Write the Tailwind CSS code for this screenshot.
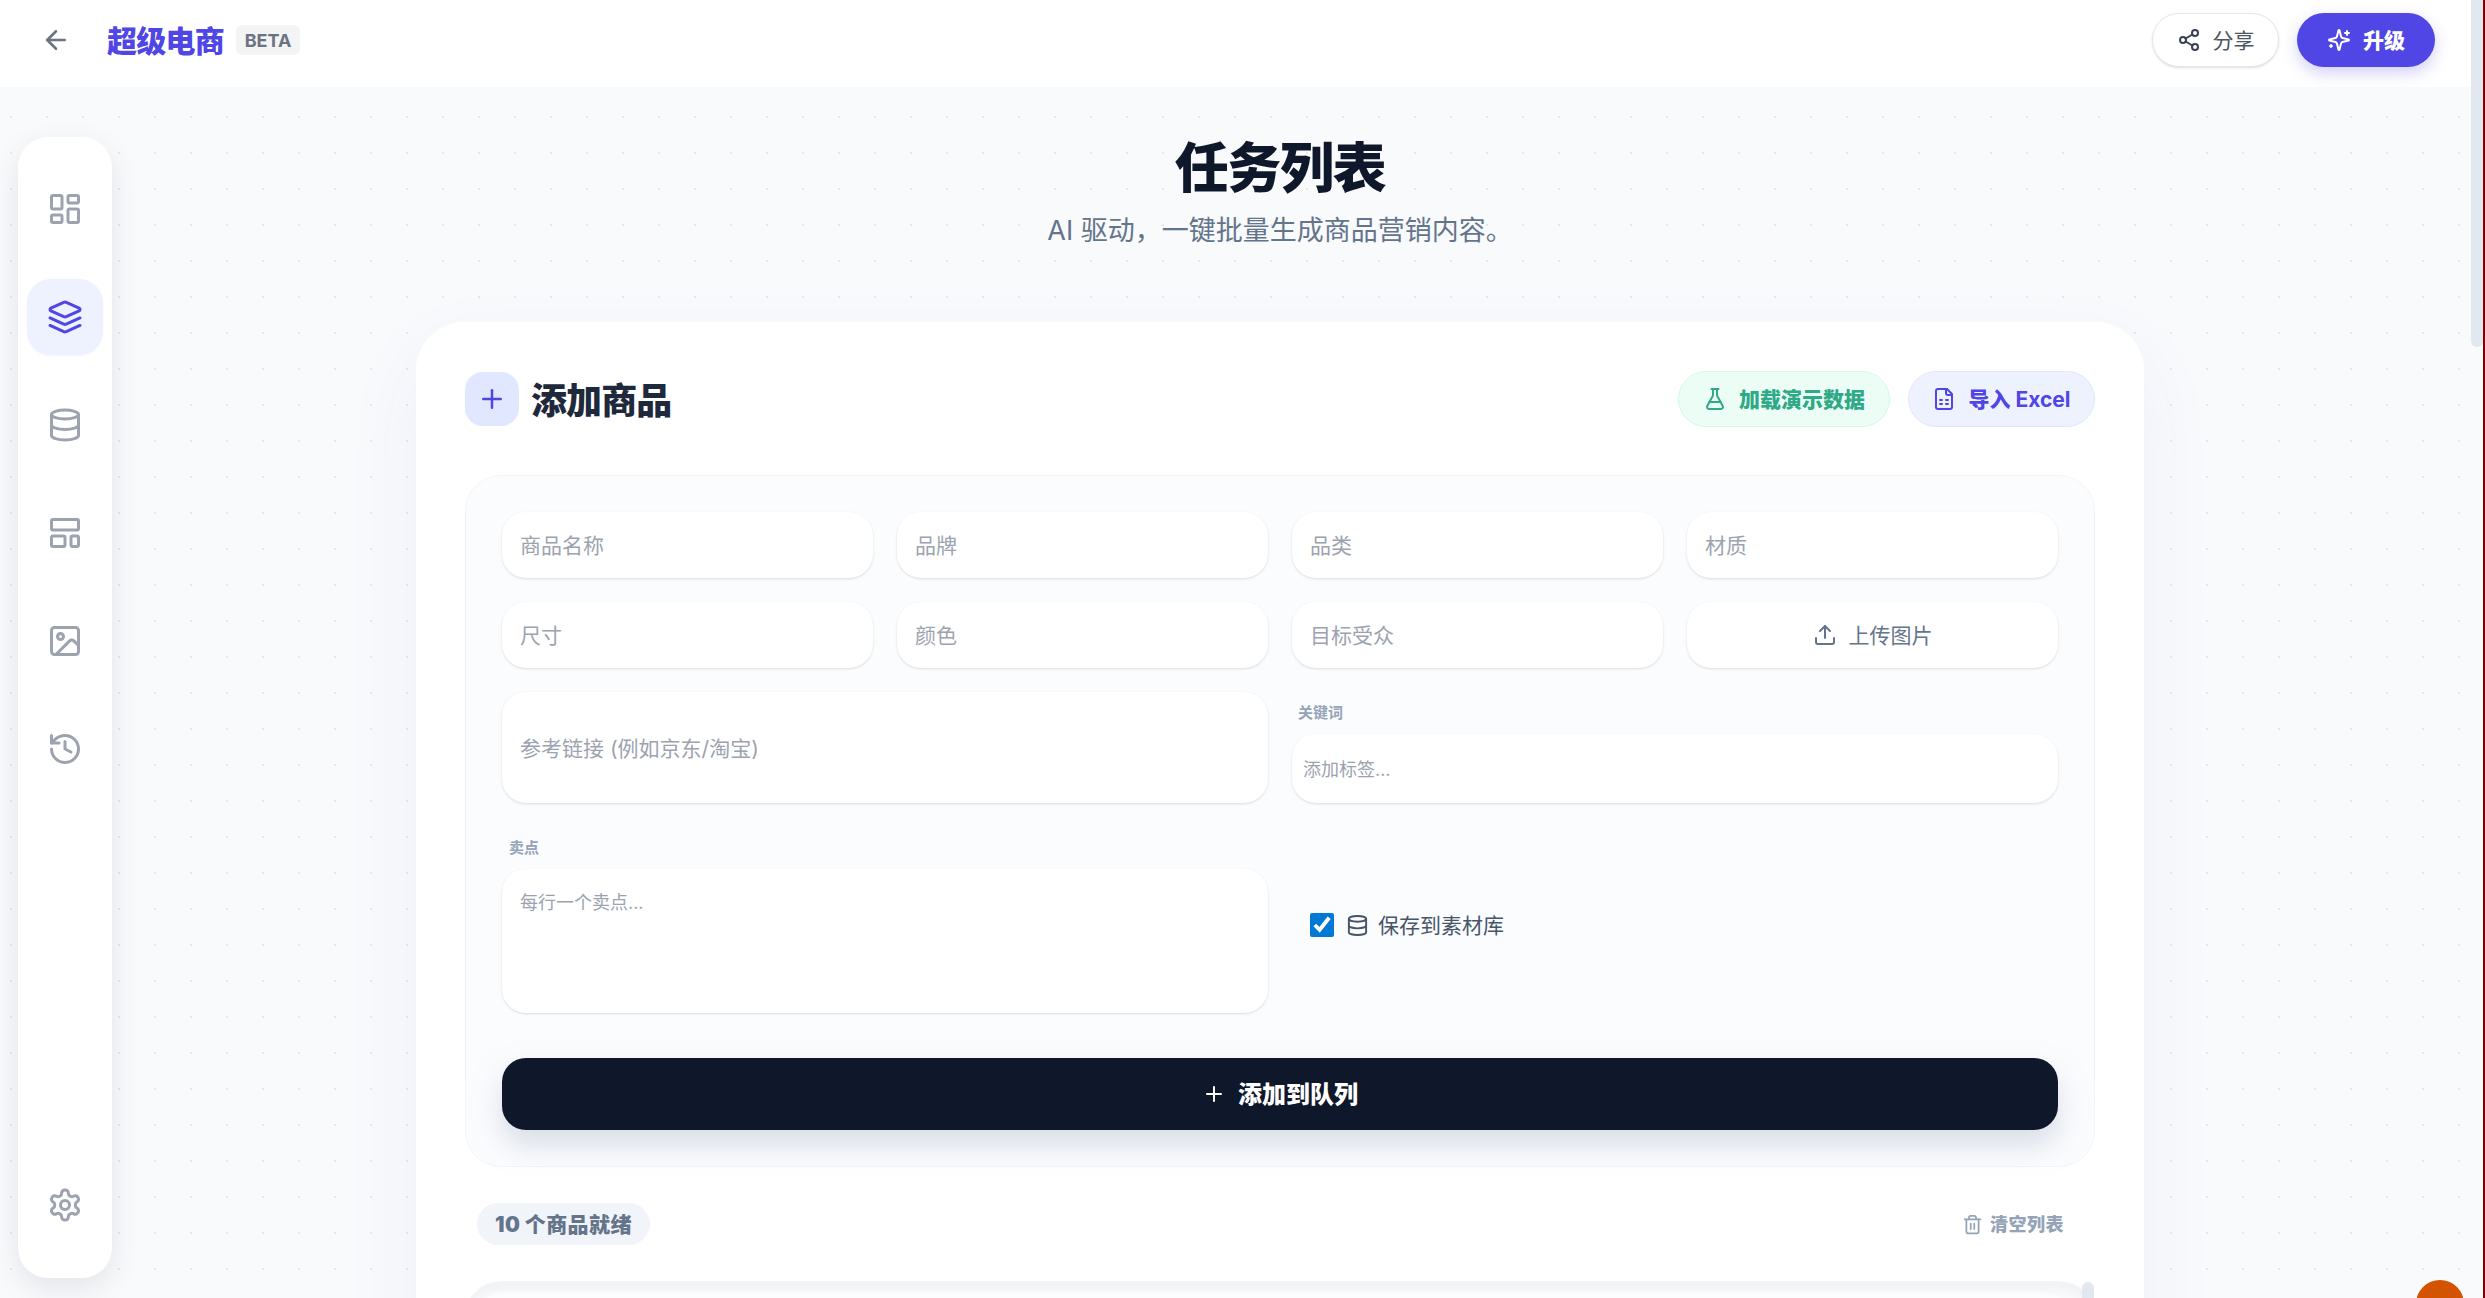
<!DOCTYPE html>
<html lang="zh-CN">
<head>
<meta charset="utf-8">
<title>超级电商</title>
<script src="https://cdn.jsdelivr.net/npm/@tailwindcss/browser@4"></script>
</head>
<body class="m-0 overflow-hidden">
<div class="relative flex h-[1298px] w-[2485px] overflow-hidden bg-[#f8fafc] font-['Inter','Noto_Sans_CJK_SC',sans-serif]">
  <div class="flex min-w-0 flex-1 flex-col">
    <!-- top bar -->
    <header class="flex h-[87px] shrink-0 items-center justify-between bg-white pb-[7px] pl-[41px] pr-[36px]">
      <div class="flex items-center">
        <svg class="size-[30px] text-[#6b7280]" viewBox="0 0 24 24" fill="none" stroke="currentColor" stroke-width="2" stroke-linecap="round" stroke-linejoin="round"><path d="m12 19-7-7 7-7"/><path d="M19 12H5"/></svg>
        <span class="ml-[36px] pt-[1px] text-[30px] font-black leading-[40px] tracking-[-0.75px] text-[#4f46e5]">超级电商</span>
        <span class="ml-[12px] flex h-[30px] w-[64px] items-center justify-center rounded-[6px] bg-[#f3f4f6] text-[18px] font-bold text-[#6b7280]">BETA</span>
      </div>
      <div class="flex items-center gap-[18px]">
        <div class="flex h-[54px] w-[127px] items-center justify-center gap-[12px] rounded-full border-[1.5px] border-[#e5e7eb] bg-white text-[21px] text-[#4b5563] shadow-sm">
          <svg class="size-[24px] text-[#374151]" viewBox="0 0 24 24" fill="none" stroke="currentColor" stroke-width="2" stroke-linecap="round" stroke-linejoin="round"><circle cx="18" cy="5" r="3"/><circle cx="6" cy="12" r="3"/><circle cx="18" cy="19" r="3"/><line x1="8.59" x2="15.42" y1="13.51" y2="17.49"/><line x1="15.41" x2="8.59" y1="6.51" y2="10.49"/></svg>
          <span class="pt-[2px]">分享</span>
        </div>
        <div class="flex h-[54px] w-[138px] items-center justify-center gap-[12px] rounded-full bg-[#4f46e5] text-[21px] font-black text-white shadow-[0_6px_15px_rgba(79,70,229,0.25)]">
          <svg class="size-[24px]" viewBox="0 0 24 24" fill="none" stroke="currentColor" stroke-width="2" stroke-linecap="round" stroke-linejoin="round"><path d="M9.937 15.5A2 2 0 0 0 8.5 14.063l-6.135-1.582a.5.5 0 0 1 0-.962L8.5 9.936A2 2 0 0 0 9.937 8.5l1.582-6.135a.5.5 0 0 1 .963 0L14.063 8.5A2 2 0 0 0 15.5 9.937l6.135 1.581a.5.5 0 0 1 0 .964L15.5 14.063a2 2 0 0 0-1.437 1.437l-1.582 6.135a.5.5 0 0 1-.963 0z"/><path d="M20 3v4"/><path d="M22 5h-4"/><path d="M4 17v2"/><path d="M5 18H3"/></svg>
          <span class="pt-[1px]">升级</span>
        </div>
      </div>
    </header>

    <div class="flex min-h-0 flex-1 bg-[radial-gradient(#e2e8f0_1.5px,transparent_1.5px)] bg-[size:36px_36px] bg-[position:-7px_12px]">
      <!-- side rail -->
      <aside class="mb-[20px] ml-[18px] mt-[50px] flex w-[94px] shrink-0 flex-col items-center gap-[32px] rounded-[30px] bg-white py-[34px] text-[#9ca3af] shadow-[0_10px_30px_rgba(15,23,42,0.09)]">
        <div class="flex size-[76px] items-center justify-center rounded-[24px]">
          <svg class="size-[36px]" viewBox="0 0 24 24" fill="none" stroke="currentColor" stroke-width="2" stroke-linecap="round" stroke-linejoin="round"><rect width="7" height="9" x="3" y="3" rx="1"/><rect width="7" height="5" x="14" y="3" rx="1"/><rect width="7" height="9" x="14" y="12" rx="1"/><rect width="7" height="5" x="3" y="16" rx="1"/></svg>
        </div>
        <div class="flex size-[76px] items-center justify-center rounded-[24px] bg-[#eef2ff] text-[#4f46e5] shadow-[0_1px_2px_rgba(79,70,229,0.06)]">
          <svg class="size-[36px]" viewBox="0 0 24 24" fill="none" stroke="currentColor" stroke-width="2" stroke-linecap="round" stroke-linejoin="round"><path d="m12.83 2.18a2 2 0 0 0-1.66 0L2.6 6.08a1 1 0 0 0 0 1.83l8.58 3.91a2 2 0 0 0 1.66 0l8.58-3.9a1 1 0 0 0 0-1.83Z"/><path d="m22 17.65-9.17 4.16a2 2 0 0 1-1.66 0L2 17.65"/><path d="m22 12.65-9.17 4.16a2 2 0 0 1-1.66 0L2 12.65"/></svg>
        </div>
        <div class="flex size-[76px] items-center justify-center rounded-[24px]">
          <svg class="size-[36px]" viewBox="0 0 24 24" fill="none" stroke="currentColor" stroke-width="2" stroke-linecap="round" stroke-linejoin="round"><ellipse cx="12" cy="5" rx="9" ry="3"/><path d="M3 5V19A9 3 0 0 0 21 19V5"/><path d="M3 12A9 3 0 0 0 21 12"/></svg>
        </div>
        <div class="flex size-[76px] items-center justify-center rounded-[24px]">
          <svg class="size-[36px]" viewBox="0 0 24 24" fill="none" stroke="currentColor" stroke-width="2" stroke-linecap="round" stroke-linejoin="round"><rect width="18" height="7" x="3" y="3" rx="1"/><rect width="9" height="7" x="3" y="14" rx="1"/><rect width="5" height="7" x="16" y="14" rx="1"/></svg>
        </div>
        <div class="flex size-[76px] items-center justify-center rounded-[24px]">
          <svg class="size-[36px]" viewBox="0 0 24 24" fill="none" stroke="currentColor" stroke-width="2" stroke-linecap="round" stroke-linejoin="round"><rect width="18" height="18" x="3" y="3" rx="2" ry="2"/><circle cx="9" cy="9" r="2"/><path d="m21 15-3.086-3.086a2 2 0 0 0-2.828 0L6 21"/></svg>
        </div>
        <div class="flex size-[76px] items-center justify-center rounded-[24px]">
          <svg class="size-[36px]" viewBox="0 0 24 24" fill="none" stroke="currentColor" stroke-width="2" stroke-linecap="round" stroke-linejoin="round"><path d="M3 12a9 9 0 1 0 9-9 9.75 9.75 0 0 0-6.74 2.74L3 8"/><path d="M3 3v5h5"/><path d="M12 7v5l4 2"/></svg>
        </div>
        <div class="mt-auto flex size-[76px] items-center justify-center rounded-[24px] pb-[3px]">
          <svg class="size-[36px]" viewBox="0 0 24 24" fill="none" stroke="currentColor" stroke-width="2" stroke-linecap="round" stroke-linejoin="round"><path d="M12.22 2h-.44a2 2 0 0 0-2 2v.18a2 2 0 0 1-1 1.73l-.43.25a2 2 0 0 1-2 0l-.15-.08a2 2 0 0 0-2.73.73l-.22.38a2 2 0 0 0 .73 2.73l.15.1a2 2 0 0 1 1 1.72v.51a2 2 0 0 1-1 1.74l-.15.09a2 2 0 0 0-.73 2.73l.22.38a2 2 0 0 0 2.73.73l.15-.08a2 2 0 0 1 2 0l.43.25a2 2 0 0 1 1 1.73V20a2 2 0 0 0 2 2h.44a2 2 0 0 0 2-2v-.18a2 2 0 0 1 1-1.73l.43-.25a2 2 0 0 1 2 0l.15.08a2 2 0 0 0 2.73-.73l.22-.39a2 2 0 0 0-.73-2.73l-.15-.08a2 2 0 0 1-1-1.74v-.5a2 2 0 0 1 1-1.74l.15-.09a2 2 0 0 0 .73-2.73l-.22-.38a2 2 0 0 0-2.73-.73l-.15.08a2 2 0 0 1-2 0l-.43-.25a2 2 0 0 1-1-1.73V4a2 2 0 0 0-2-2z"/><circle cx="12" cy="12" r="3"/></svg>
        </div>
      </aside>

      <!-- main -->
      <main class="flex min-w-0 flex-1 flex-col items-center overflow-hidden pr-[23px]">
        <h1 class="mt-[52px] text-[54px] font-black leading-[60px] tracking-[-1.35px] text-[#0f172a]">任务列表</h1>
        <p class="mt-[12px] text-[27px] leading-[40px] text-[#64748b]">AI 驱动，一键批量生成商品营销内容。</p>

        <section class="mt-[71px] w-[1728px] shrink-0 rounded-t-[48px] border-[1.5px] border-b-0 border-white bg-white px-[48px] pb-[48px] pt-[48px] shadow-[0_30px_80px_rgba(79,70,229,0.06)]">
          <div class="flex h-[56px] items-center justify-between">
            <div class="flex items-center gap-[12px]">
              <div class="flex size-[54px] items-center justify-center rounded-[18px] bg-[#e0e7ff] text-[#4f46e5]">
                <svg class="size-[30px]" viewBox="0 0 24 24" fill="none" stroke="currentColor" stroke-width="2" stroke-linecap="round" stroke-linejoin="round"><path d="M5 12h14"/><path d="M12 5v14"/></svg>
              </div>
              <h2 class="pt-[3px] text-[36px] font-black leading-[54px] tracking-[-0.9px] text-[#1e293b]">添加商品</h2>
            </div>
            <div class="flex items-center gap-[18px]">
              <div class="flex h-[56px] w-[212px] items-center justify-center gap-[12px] rounded-full border-[1.5px] border-[#d1fae5] bg-[#ecfdf5] text-[21px] font-black text-[#2fa987]">
                <svg class="size-[24px]" viewBox="0 0 24 24" fill="none" stroke="currentColor" stroke-width="2" stroke-linecap="round" stroke-linejoin="round"><path d="M14 2v6a2 2 0 0 0 .245.96l5.51 10.08A2 2 0 0 1 18 22H6a2 2 0 0 1-1.755-2.96l5.51-10.08A2 2 0 0 0 10 8V2"/><path d="M6.453 15h11.094"/><path d="M8.5 2h7"/></svg>
                <span class="pt-[1px]">加载演示数据</span>
              </div>
              <div class="flex h-[56px] w-[187px] items-center justify-center gap-[12px] rounded-full border-[1.5px] border-[#e0e7ff] bg-[#eef2ff] text-[21px] font-bold text-[#4f46e5]">
                <svg class="size-[24px]" viewBox="0 0 24 24" fill="none" stroke="currentColor" stroke-width="2" stroke-linecap="round" stroke-linejoin="round"><path d="M15 2H6a2 2 0 0 0-2 2v16a2 2 0 0 0 2 2h12a2 2 0 0 0 2-2V7Z"/><path d="M14 2v4a2 2 0 0 0 2 2h4"/><path d="M8 13h2"/><path d="M14 13h2"/><path d="M8 17h2"/><path d="M14 17h2"/></svg>
                <span class="pt-[1px]"><span class="font-black">导入</span> Excel</span>
              </div>
            </div>
          </div>

          <div class="mt-[48px] rounded-[36px] border-[1.5px] border-[#f1f5f9] bg-[#fbfcfe] p-[36px]">
            <div class="grid grid-cols-4 gap-x-[24px] gap-y-[24px]">
              <div class="flex h-[66px] items-center rounded-[24px] bg-white px-[18px] pt-[2px] text-[21px] text-[#9ca3af] shadow-sm">商品名称</div>
              <div class="flex h-[66px] items-center rounded-[24px] bg-white px-[18px] pt-[2px] text-[21px] text-[#9ca3af] shadow-sm">品牌</div>
              <div class="flex h-[66px] items-center rounded-[24px] bg-white px-[18px] pt-[2px] text-[21px] text-[#9ca3af] shadow-sm">品类</div>
              <div class="flex h-[66px] items-center rounded-[24px] bg-white px-[18px] pt-[2px] text-[21px] text-[#9ca3af] shadow-sm">材质</div>
              <div class="flex h-[66px] items-center rounded-[24px] bg-white px-[18px] pt-[2px] text-[21px] text-[#9ca3af] shadow-sm">尺寸</div>
              <div class="flex h-[66px] items-center rounded-[24px] bg-white px-[18px] pt-[2px] text-[21px] text-[#9ca3af] shadow-sm">颜色</div>
              <div class="flex h-[66px] items-center rounded-[24px] bg-white px-[18px] pt-[2px] text-[21px] text-[#9ca3af] shadow-sm">目标受众</div>
              <div class="flex h-[66px] items-center justify-center gap-[12px] rounded-[24px] bg-white text-[21px] text-[#64748b] shadow-sm">
                <svg class="size-[24px]" viewBox="0 0 24 24" fill="none" stroke="currentColor" stroke-width="2" stroke-linecap="round" stroke-linejoin="round"><path d="M21 15v4a2 2 0 0 1-2 2H5a2 2 0 0 1-2-2v-4"/><polyline points="17 8 12 3 7 8"/><line x1="12" x2="12" y1="3" y2="15"/></svg>
                <span class="pt-[2px]">上传图片</span>
              </div>

              <div class="col-span-2 flex h-[111px] items-center rounded-[24px] bg-white px-[18px] pt-[2px] text-[21px] text-[#9ca3af] shadow-sm">参考链接 (例如京东/淘宝)</div>
              <div class="col-span-2 flex h-[111px] flex-col">
                <div class="mb-[10px] mt-[10px] pl-[6px] text-[15px] font-bold leading-[22px] text-[#94a3b8]">关键词</div>
                <div class="flex flex-1 items-center rounded-[24px] bg-white px-[11px] pt-[1px] text-[18px] text-[#9ca3af] shadow-sm">添加标签...</div>
              </div>

              <div class="col-span-2 flex flex-col">
                <div class="mb-[10px] mt-[10px] pl-[7px] text-[15px] font-bold leading-[22px] text-[#94a3b8]">卖点</div>
                <div class="h-[144px] rounded-[24px] bg-white px-[18px] pt-[20px] text-[18px] leading-[27px] text-[#9ca3af] shadow-sm">每行一个卖点...</div>
              </div>
              <div class="col-span-2 flex items-center pl-[18px] pt-[10px]">
                <input type="checkbox" checked class="size-[24px] accent-[#0078d4]">
                <svg class="ml-[12px] size-[23px] text-[#475569]" viewBox="0 0 24 24" fill="none" stroke="currentColor" stroke-width="2" stroke-linecap="round" stroke-linejoin="round"><ellipse cx="12" cy="5" rx="9" ry="3"/><path d="M3 5V19A9 3 0 0 0 21 19V5"/><path d="M3 12A9 3 0 0 0 21 12"/></svg>
                <span class="ml-[9px] pt-[1px] text-[21px] text-[#475569]">保存到素材库</span>
              </div>
            </div>
            <div class="mt-[45px] flex h-[72px] items-center justify-center gap-[12px] rounded-[24px] bg-[#0f172a] text-[24px] font-black text-white shadow-[0_15px_30px_rgba(148,163,184,0.35)]">
              <svg class="size-[24px]" viewBox="0 0 24 24" fill="none" stroke="currentColor" stroke-width="2" stroke-linecap="round" stroke-linejoin="round"><path d="M5 12h14"/><path d="M12 5v14"/></svg>
              <span class="pt-[2px]">添加到队列</span>
            </div>
          </div>

          <div class="mt-[36px] flex h-[42px] items-center justify-between pl-[12px] pr-[31px]">
            <span class="flex h-[42px] items-center rounded-full bg-[#f1f5f9] px-[18px] pt-[1px] text-[21px] font-black tracking-[0.4px] text-[#64748b]">10 个商品就绪</span>
            <span class="flex items-center gap-[7px] text-[18px] font-black tracking-[0.5px] text-[#94a3b8]">
              <svg class="size-[21px]" viewBox="0 0 24 24" fill="none" stroke="currentColor" stroke-width="2" stroke-linecap="round" stroke-linejoin="round"><path d="M3 6h18"/><path d="M19 6v14c0 1-1 2-2 2H7c-1 0-2-1-2-2V6"/><path d="M8 6V4c0-1 1-2 2-2h4c1 0 2 1 2 2v2"/><line x1="10" x2="10" y1="11" y2="17"/><line x1="14" x2="14" y1="11" y2="17"/></svg>
              清空列表
            </span>
          </div>

          <div class="relative mt-[36px] h-[300px] rounded-t-[36px] border-[1.5px] border-b-0 border-[#f1f5f9] bg-[#f8fafc] px-[12px] pt-[11px] shadow-[inset_0_6px_10px_rgba(15,23,42,0.04)]">
            <div class="mr-[12px] h-full rounded-t-[24px] bg-[#fcfdfe]"></div>
            <div class="absolute right-0 top-0 h-[200px] w-[12px] rounded-full bg-[#e2e8f0]"></div>
          </div>
        </section>
      </main>
    </div>
  </div>

  <!-- page scrollbar -->
  <div class="w-[12px] shrink-0 bg-[#f8fafc]">
    <div class="h-[347px] rounded-b-[6px] bg-[#e2e8f0]"></div>
  </div>
  <div class="w-[2px] shrink-0 bg-[#7f0000]"></div>

  <!-- floating help button -->
  <div class="absolute left-[2416px] top-[1280px] size-[48px] rounded-full bg-[#d35400]"></div>
</div>
</body>
</html>
